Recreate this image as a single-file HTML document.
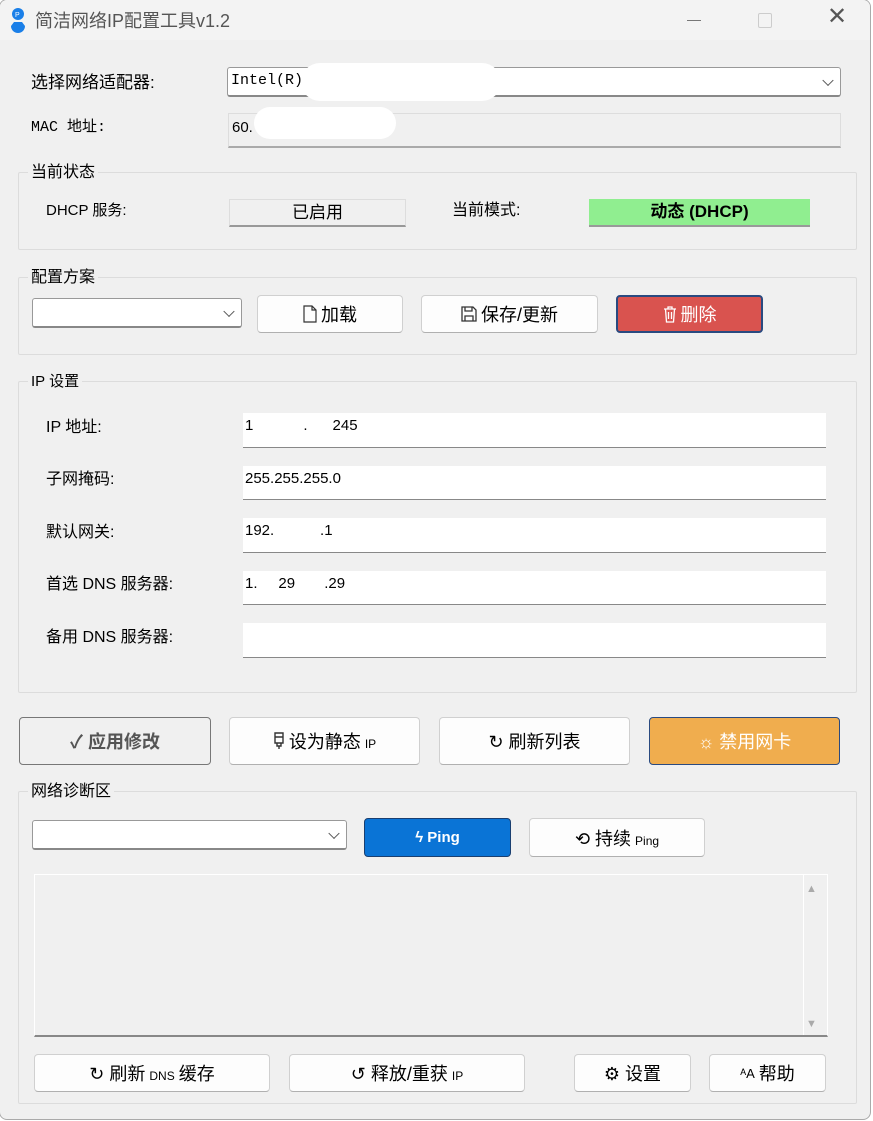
<!DOCTYPE html>
<html><head><meta charset="utf-8"><style>
*{box-sizing:border-box;margin:0;padding:0}
body{width:873px;height:1121px;background:#fff;font-family:"Liberation Sans","Noto Sans CJK SC",sans-serif;font-size:16px;color:#000;position:relative;overflow:hidden}
.win{position:absolute;left:-1px;top:-1px;width:872px;height:1121px;background:#f0f0f0;border:1px solid #aaa;border-radius:8px;overflow:hidden}
.tb{position:absolute;left:0;top:0;right:0;height:40px;background:#f3f3f3}
.a{position:absolute}
.lbl{position:absolute;font-size:16px;line-height:20px;white-space:nowrap}
.grp{position:absolute;border:1px solid #dcdcdc;border-radius:2px}
.gt{position:absolute;background:#f0f0f0;padding:0 3px;font-size:16px;line-height:20px}
.combo{position:absolute;background:#fff;border:1px solid #999;border-bottom:2px solid #888;border-radius:3px}
.combo:after{content:"";position:absolute;right:8px;top:50%;width:7px;height:7px;border-right:1.3px solid #555;border-bottom:1.3px solid #555;transform:translateY(-70%) rotate(45deg)}
.field{position:absolute;background:#fff;border-bottom:1px solid #888;font-size:15px;padding:4px 2px}
.btn{position:absolute;background:#fdfdfd;border:1px solid #d0d0d0;border-bottom:1px solid #b0b0b0;border-radius:4px;display:flex;align-items:center;justify-content:center;font-size:18px;gap:4px;white-space:nowrap}
.sm{font-size:12px;margin-top:6px}
.blob{position:absolute;background:#fff;border-radius:50%}
</style></head><body>
<div class="win">
<div class="tb">
<svg class="a" style="left:8px;top:6px" width="20" height="28" viewBox="0 0 20 28"><circle cx="10" cy="8" r="6" fill="#1a7fe8"/><path d="M3 20a7 7 0 0 0 14 0l-3-4h-8z" fill="#1a7fe8"/><text x="7" y="11" font-size="7" fill="#fff">P</text></svg>
<div class="lbl" style="left:35px;top:11px;font-size:18px;color:#555">简洁网络IP配置工具v1.2</div>
<div class="a" style="left:687px;top:20px;width:14px;height:1px;background:#777"></div>
<div class="a" style="left:758px;top:13px;width:14px;height:15px;border:1px solid #ccc;border-radius:2px"></div>
<div class="lbl" style="left:827px;top:7px;font-size:24px;color:#555;font-weight:100">✕</div>
</div>

<div class="lbl" style="left:31px;top:73px;font-size:17px">选择网络适配器:</div>
<div class="combo" style="left:227px;top:67px;width:614px;height:30px"><span style="position:absolute;left:3px;top:4px;font-family:'Liberation Mono',monospace;font-size:15px">Intel(R)</span></div>
<div class="blob" style="left:301px;top:63px;width:200px;height:38px;border-radius:20px"></div>
<div class="lbl" style="left:31px;top:118px;font-family:'Liberation Mono','Noto Sans CJK SC',monospace;font-size:15px">MAC 地址:</div>
<div class="a" style="left:228px;top:113px;width:613px;height:35px;border:1px solid #ddd;border-bottom:2px solid #aaa"><span style="position:absolute;left:3px;top:5px;font-size:15px">60.</span></div>
<div class="blob" style="left:254px;top:107px;width:142px;height:32px;border-radius:16px"></div>

<div class="grp" style="left:18px;top:172px;width:839px;height:78px"></div>
<div class="gt" style="left:28px;top:163px">当前状态</div>
<div class="lbl" style="left:46px;top:201px;font-size:15px">DHCP 服务:</div>
<div class="a" style="left:229px;top:199px;width:177px;height:28px;background:#f0f0f0;border:1px solid #ddd;border-bottom:2px solid #999;text-align:center;font-size:17px;line-height:26px">已启用</div>
<div class="lbl" style="left:452px;top:201px;font-size:16px">当前模式:</div>
<div class="a" style="left:589px;top:199px;width:221px;height:28px;background:#90ee90;border-bottom:2px solid #999;text-align:center;font-size:17px;font-weight:bold;line-height:26px">动态 (DHCP)</div>

<div class="grp" style="left:18px;top:277px;width:839px;height:78px"></div>
<div class="gt" style="left:28px;top:268px">配置方案</div>
<div class="combo" style="left:32px;top:298px;width:210px;height:30px"></div>
<div class="btn" style="left:257px;top:295px;width:146px;height:38px"><svg width="14" height="18" viewBox="0 0 14 18"><path d="M1 1h8l4 4v12H1z M9 1v4h4" fill="none" stroke="#333" stroke-width="1.2"/></svg> 加载</div>
<div class="btn" style="left:421px;top:295px;width:177px;height:38px"><svg width="16" height="16" viewBox="0 0 16 16"><path d="M1 1h11l3 3v11H1z M4 1v4h7V1 M4 15v-5h8v5" fill="none" stroke="#333" stroke-width="1.3"/></svg> 保存/更新</div>
<div class="btn" style="left:616px;top:295px;width:147px;height:38px;background:#d9534f;border:2px solid #2a4a80;color:#fff"><svg width="14" height="18" viewBox="0 0 14 18"><path d="M1 4h12 M5 4V2h4v2 M2.5 4l1 13h7l1-13 M5.5 7v7 M8.5 7v7" fill="none" stroke="#fff" stroke-width="1.3"/></svg> 删除</div>

<div class="grp" style="left:18px;top:381px;width:839px;height:312px"></div>
<div class="gt" style="left:28px;top:372px;font-size:15px">IP 设置</div>
<div class="lbl" style="left:46px;top:418px">IP 地址:</div>
<div class="lbl" style="left:46px;top:470px">子网掩码:</div>
<div class="lbl" style="left:46px;top:523px">默认网关:</div>
<div class="lbl" style="left:46px;top:575px">首选 DNS 服务器:</div>
<div class="lbl" style="left:46px;top:628px">备用 DNS 服务器:</div>
<div class="field" style="left:243px;top:413px;width:583px;height:35px">1&nbsp;&nbsp;&nbsp;&nbsp;&nbsp;&nbsp;&nbsp;&nbsp;&nbsp;&nbsp;&nbsp;&nbsp;.&nbsp;&nbsp;&nbsp;&nbsp;&nbsp;&nbsp;245</div>
<div class="field" style="left:243px;top:466px;width:583px;height:34px">255.255.255.0</div>
<div class="field" style="left:243px;top:518px;width:583px;height:35px">192.&nbsp;&nbsp;&nbsp;&nbsp;&nbsp;&nbsp;&nbsp;&nbsp;&nbsp;&nbsp;&nbsp;.1</div>
<div class="field" style="left:243px;top:571px;width:583px;height:34px">1.&nbsp;&nbsp;&nbsp;&nbsp;&nbsp;29&nbsp;&nbsp;&nbsp;&nbsp;&nbsp;&nbsp;&nbsp;.29</div>
<div class="field" style="left:243px;top:623px;width:583px;height:35px"></div>

<div class="btn" style="left:19px;top:717px;width:192px;height:48px;background:#f0f0f0;border:1.5px solid #777;color:#555;font-weight:bold">✓ 应用修改</div>
<div class="btn" style="left:229px;top:717px;width:191px;height:48px"><svg width="12" height="18" viewBox="0 0 12 18"><path d="M2 1h8v10H2z M2 5h8 M4 11v3h4v-3 M6 14v3" fill="none" stroke="#333" stroke-width="1.4"/></svg> 设为静态<span class="sm">IP</span></div>
<div class="btn" style="left:439px;top:717px;width:191px;height:48px">↻ 刷新列表</div>
<div class="btn" style="left:649px;top:717px;width:191px;height:48px;background:#f0ad4e;border:1.5px solid #2a4a80;color:#fff">☼ 禁用网卡</div>

<div class="grp" style="left:18px;top:791px;width:839px;height:313px"></div>
<div class="gt" style="left:28px;top:782px">网络诊断区</div>
<div class="combo" style="left:32px;top:820px;width:315px;height:30px"></div>
<div class="btn" style="left:364px;top:818px;width:147px;height:39px;background:#0a74d6;border:1px solid #1a3f70;color:#fff;font-size:15px;font-weight:bold">ϟ Ping</div>
<div class="btn" style="left:529px;top:818px;width:176px;height:39px">⟲ 持续 <span class="sm">Ping</span></div>

<div class="a" style="left:34px;top:874px;width:794px;height:163px;background:#f0f0f0;border:1px solid #fff;border-bottom:2px solid #888"></div>
<div class="a" style="left:803px;top:875px;width:24px;height:160px;border-left:1px solid #fff"></div>
<div class="lbl" style="left:806px;top:879px;font-size:11px;color:#aaa">▲</div>
<div class="lbl" style="left:806px;top:1014px;font-size:11px;color:#aaa">▼</div>

<div class="btn" style="left:34px;top:1054px;width:236px;height:38px">↻ 刷新 <span class="sm">DNS</span> 缓存</div>
<div class="btn" style="left:289px;top:1054px;width:236px;height:38px">↺ 释放/重获 <span class="sm">IP</span></div>
<div class="btn" style="left:574px;top:1054px;width:117px;height:38px">⚙ 设置</div>
<div class="btn" style="left:709px;top:1054px;width:117px;height:38px"><span style="font-size:13px">ᴬA</span> 帮助</div>
</div>
</body></html>
